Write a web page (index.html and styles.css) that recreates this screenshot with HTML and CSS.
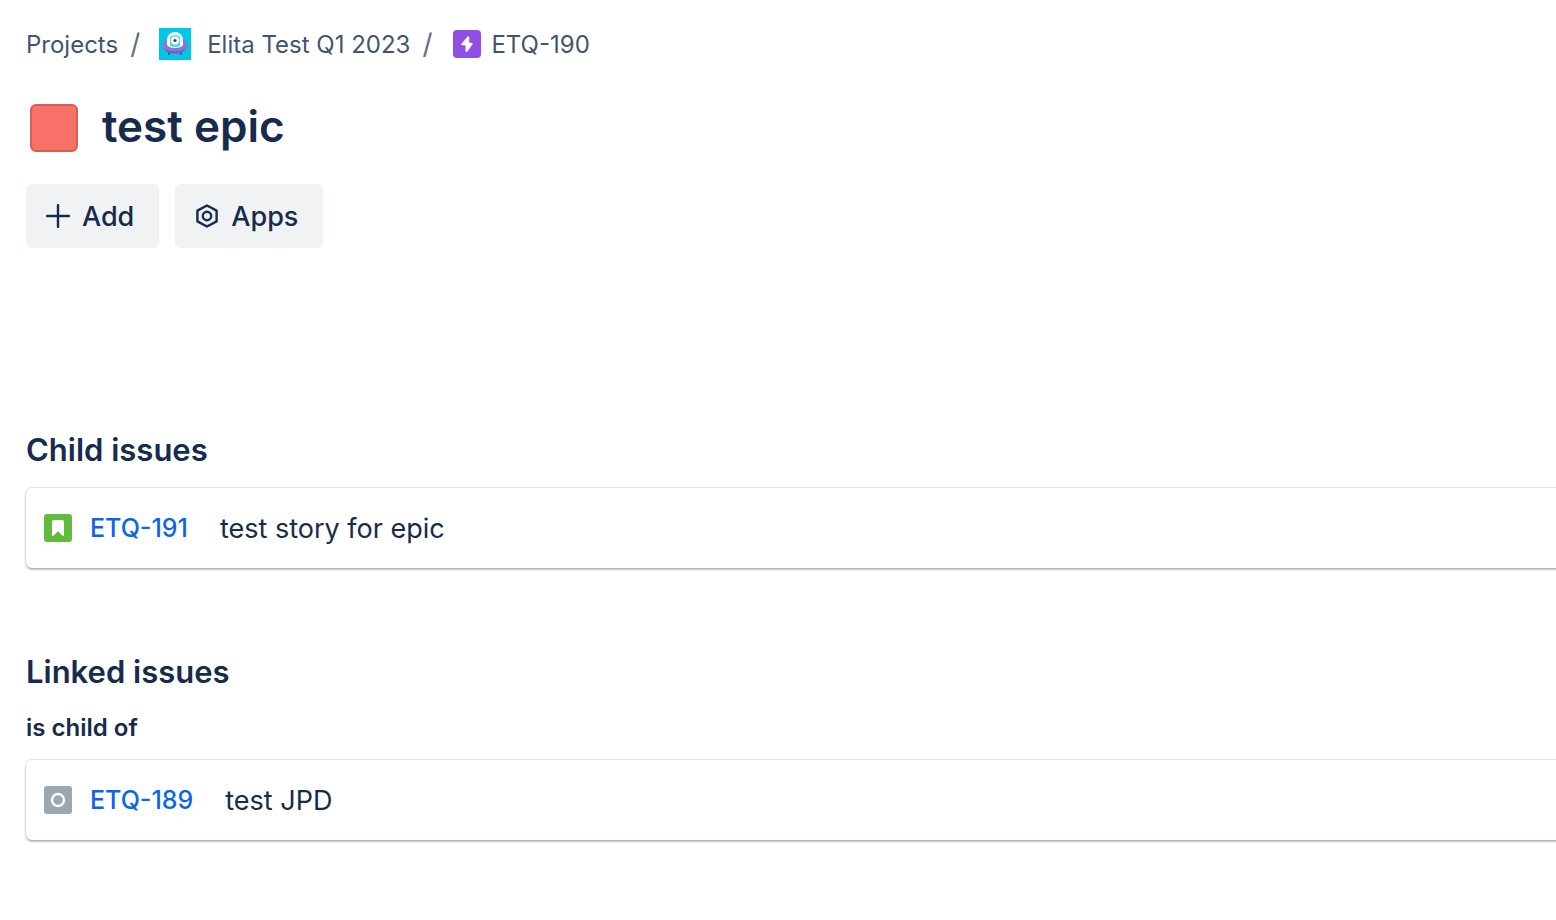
FILE: index.html
```html
<!DOCTYPE html>
<html lang="en">
<head>
    <meta charset="UTF-8">
    <meta name="viewport" content="width=device-width, initial-scale=1.0">
    <title>ETQ-190 test epic</title>
    <link rel="stylesheet" href="styles.css">
</head>
<body>
    <main class="issue">
        <nav class="breadcrumbs" aria-label="Breadcrumbs">
            <a href="#projects">Projects</a>
            <span class="separator">/</span>
            <a class="crumb-project" href="#project">
                <svg width="32" height="32" viewBox="0 0 32 32" aria-hidden="true">
                    <rect width="32" height="32" fill="#00c7e5"/>
                    <path d="M10 22v5M22 22v5" stroke="#5e4db2" stroke-width="2"/>
                    <ellipse cx="16" cy="17.500" rx="12.500" ry="7.800" fill="#8777d9"/>
                    <path d="M5 21c4 6 18 6 22 0-5 3-17 3-22 0z" fill="#6f5dc6"/>
                    <path d="M8 17v-5a8 8 0 0 1 16 0v5q-2 3-8 3t-8-3z" fill="#fff"/>
                    <path d="M11 18V9q5-4 10 0v9q-5 2-10 0z" fill="#4fd8ec"/>
                    <circle cx="16" cy="12.500" r="4" fill="#fff"/>
                    <circle cx="16" cy="12.500" r="1.600" fill="#403294"/>
                </svg>
                Elita Test Q1 2023
            </a>
            <span class="separator">/</span>
            <a class="crumb-issue" href="#etq-190">
                <svg width="28" height="28" viewBox="0 0 28 28" aria-hidden="true">
                    <rect width="28" height="28" rx="4" fill="#904ee2"/>
                    <path d="M14.600 6.500 8.500 13.800c-.5.7-.2 1.500.6 1.500h3.400v5.400c0 1.200 1.100 1.600 1.900.7l5-7c.5-.7.2-1.600-.7-1.600h-2.500V7.200c0-1-1-1.400-1.600-.7z" fill="#fff"/>
                </svg>
                ETQ-190
            </a>
        </nav>

        <header class="title">
            <button class="color-picker" aria-label="Issue color"></button>
            <h1>test epic</h1>
        </header>

        <div class="actions">
            <button class="action">
                <svg width="24" height="24" viewBox="0 0 24 24" aria-hidden="true">
                    <path d="M12 1v22M1 12h22" stroke="currentColor" stroke-width="2.400" stroke-linecap="round"/>
                </svg>
                Add
            </button>
            <button class="action">
                <svg width="24" height="24" viewBox="0 0 24 24" fill="none" stroke="currentColor" stroke-width="2.400" stroke-linejoin="round" aria-hidden="true">
                    <path d="M12 1.500 21.600 6.600v10.800L12 22.500 2.400 17.400V6.600z"/>
                    <circle cx="12" cy="12" r="4.200"/>
                </svg>
                Apps
            </button>
        </div>

        <section class="child-issues">
            <h2>Child issues</h2>
            <div class="card">
                <svg width="28" height="28" viewBox="0 0 28 28" aria-hidden="true">
                    <rect width="28" height="28" rx="3" fill="#63ba3c"/>
                    <path d="M8 8a2 2 0 0 1 2-2h8a2 2 0 0 1 2 2v13.200c0 .8-.8 1-1.300.5L14 17.200l-4.700 4.500c-.5.5-1.300.3-1.300-.5z" fill="#fff"/>
                </svg>
                <a class="key" href="#etq-191">ETQ-191</a>
                <span class="summary">test story for epic</span>
            </div>
        </section>

        <section class="linked-issues">
            <h2>Linked issues</h2>
            <h3>is child of</h3>
            <div class="card">
                <svg width="28" height="28" viewBox="0 0 28 28" aria-hidden="true">
                    <rect width="28" height="28" rx="3" fill="#9ba7b3"/>
                    <circle cx="14" cy="14" r="6" fill="none" stroke="#fff" stroke-width="2.400"/>
                </svg>
                <a class="key" href="#etq-189">ETQ-189</a>
                <span class="summary">test JPD</span>
            </div>
        </section>
    </main>
</body>
</html>
```
FILE: styles.css
```css
* {
    box-sizing: border-box;
}
body {
    margin: 0;
    background: #fff;
    color: #172b4d;
    font-family: Inter, "Liberation Sans", sans-serif;
    overflow-x: hidden;
}
h1, h2, h3 {
    margin: 0;
    font-weight: 600;
}
a {
    text-decoration: none;
}
svg {
    flex: none;
}
.issue {
    padding: 28px 0 32px 26px;
}
.breadcrumbs {
    display: flex;
    align-items: center;
    height: 32px;
    font-size: 24px;
    color: #44546f;
}
.breadcrumbs a {
    display: flex;
    align-items: center;
    color: inherit;
}
.separator {
    width: 41px;
    padding-left: 12px;
    font-size: 28px;
    color: #626f86;
}
.crumb-project {
    gap: 16px;
}
.crumb-issue {
    gap: 10px;
    margin-left: 2px;
}
.title {
    display: flex;
    align-items: center;
    gap: 24px;
    margin: 40px 0 28px 4px;
}
.title h1 {
    padding-bottom: 4px;
    font-size: 44px;
    line-height: 52px;
}
.color-picker {
    width: 48px;
    height: 48px;
    padding: 0;
    border: 2px solid #d65f56;
    border-radius: 6px;
    background: #f87168;
}
.actions {
    display: flex;
    gap: 16px;
}
.action {
    display: flex;
    align-items: center;
    gap: 12px;
    height: 64px;
    padding: 0 25px 0 20px;
    border: none;
    border-radius: 6px;
    background: #f1f2f4;
    color: #172b4d;
    font-family: inherit;
    font-size: 27px;
    font-weight: 500;
}
.child-issues {
    margin-top: 182px;
}
.linked-issues {
    margin-top: 84px;
}
h2 {
    margin-bottom: 18px;
    font-size: 31px;
    line-height: 40px;
}
h3 {
    padding-top: 2px;
    margin-bottom: 16px;
    font-size: 24px;
    line-height: 32px;
}
/* the card runs past the right edge of the window */
.card {
    display: flex;
    align-items: center;
    height: 80px;
    margin-right: -12px;
    padding: 0 18px;
    border-radius: 6px;
    background: #fff;
    box-shadow: 0 2px 2px rgba(9, 30, 66, 0.25), 0 0 1px 1px rgba(9, 30, 66, 0.13);
}
.key {
    margin: 0 32px 0 18px;
    font-size: 25px;
    font-weight: 500;
    color: #0c66e4;
}
.summary {
    font-size: 27px;
}
```
